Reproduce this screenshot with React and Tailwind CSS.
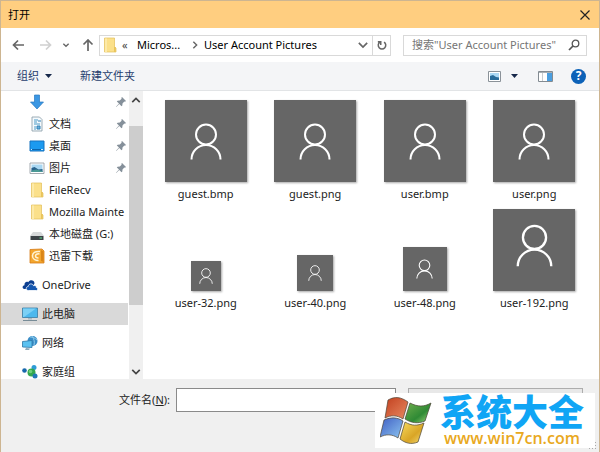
import React from "react";

const icons = {
  folder: (
    <svg viewBox="0 0 16 16" className="h-4 w-4 shrink-0">
      <path d="M2.500 1h10v9.500l1.500.5v4H2.500z" fill="#fbe08a" stroke="#e3bf57" strokeWidth=".7" />
      <path d="M12 10h1.800v5H12z" fill="#e9c45c" />
      <path d="M3 1.500h2V15H3z" fill="#fdeaa8" />
    </svg>
  ),
  download: (
    <svg viewBox="0 0 16 16" className="h-4 w-4 shrink-0">
      <path d="M5.500 1h5v7h4L8 15 1.500 8h4z" fill="#3b97e3" stroke="#2878c0" strokeWidth=".7" />
    </svg>
  ),
  document: (
    <svg viewBox="0 0 16 16" className="h-4 w-4 shrink-0">
      <path d="M3 1h7.500L13 3.500V15H3z" fill="#f5fafd" stroke="#8799a5" strokeWidth=".8" />
      <path d="M5 4h4M5 6h3M5 8h6M5 11h2M5 13h2" stroke="#4a9bc7" />
      <path d="M9 5h3M8 10h3v3H8z" stroke="#3380b5" fill="#68b2dd" />
    </svg>
  ),
  desktop: (
    <svg viewBox="0 0 16 16" className="h-4 w-4 shrink-0">
      <path d="M1 3h14v10H1z" fill="#1c9af0" stroke="#1673bf" />
      <path d="M2 11.500h12" stroke="#0c65ad" />
      <path d="M2 11.500h1m9 0h2" stroke="#c5e8ff" />
    </svg>
  ),
  picture: (
    <svg viewBox="0 0 16 16" className="h-4 w-4 shrink-0">
      <path d="M1 3h14v10.500H1z" fill="#fff" stroke="#8d969c" strokeWidth=".8" />
      <path d="M2.500 4.500h11V12h-11z" fill="#a9d7f2" />
      <path d="M2.500 8l3-1 4 2.500 4-.5v3h-11z" fill="#28618b" />
      <path d="M2.500 10.500l5-1 6 1.500v1h-11z" fill="#4b9a94" />
    </svg>
  ),
  drive: (
    <svg viewBox="0 0 16 16" className="h-4 w-4 shrink-0">
      <path d="M4 6h8l3 4H1z" fill="#d7d9da" />
      <path d="M1.500 10h13v4h-13z" fill="#3d4347" />
      <path d="M10.500 12h2.500" stroke="#5fe08b" />
    </svg>
  ),
  thunder: (
    <svg viewBox="0 0 16 16" className="h-4 w-4 shrink-0">
      <path d="M1 1.500l12-.5 2 2v12H1z" fill="#f3a62e" stroke="#d77b16" strokeWidth=".8" />
      <path d="M12 2l2.500 1.500V14L12 13z" fill="#d98518" />
      <path d="M11 3.500C6 3 3.500 5 3.500 8s3 4.500 6 4.500M10.500 6C8 5.500 6.500 6.500 6.500 8s1.500 2 3 2" fill="none" stroke="#fff3d3" strokeWidth="1.500" />
    </svg>
  ),
  cloud: (
    <svg viewBox="0 0 16 16" className="h-4 w-4 shrink-0">
      <path d="M2.500 12C0 12 0 8.500 2.500 8.300 2 5 5 4 6.300 5.200 8 2 12.500 3 12.500 6.500L9 12z" fill="#0c3f91" />
      <path d="M6.500 13.500c-3 0-3-3.800-.3-4C6.500 6.500 10.500 6 11.500 8.700c2-.7 3.200.6 2.800 1.800 2 .3 1.700 3-.3 3z" fill="#1557b0" stroke="#fff" strokeWidth=".8" />
    </svg>
  ),
  computer: (
    <svg viewBox="0 0 16 16" className="h-4 w-4 shrink-0">
      <path d="M.5 2h15v9.500H.5z" fill="#4cb8ed" stroke="#397ca3" strokeWidth=".8" />
      <path d="M1 2.500h13L2 11H1z" fill="#7bd0f5" />
      <path d="M6 12h4v1.500H6z" fill="#a9bac4" />
      <path d="M1 14.500h14" stroke="#788c97" />
    </svg>
  ),
  network: (
    <svg viewBox="0 0 16 16" className="h-4 w-4 shrink-0">
      <circle cx="10.500" cy="6" r="5" fill="#398dc7" />
      <path d="M8 2c3 0 5 1 7 3M10 1c2 3 3 6 2 9" stroke="#8cc9ea" fill="none" />
      <path d="M.5 6.500L10 5.500v7L.5 12z" fill="#5ac1f0" stroke="#2d76a5" strokeWidth=".8" />
      <path d="M4 13l4 .5-1 1.500H3z" fill="#8ba8b9" />
    </svg>
  ),
  homegroup: (
    <svg viewBox="0 0 16 16" className="h-4 w-4 shrink-0">
      <circle cx="2.500" cy="6.500" r="2.300" fill="#1767ac" />
      <circle cx="12" cy="3.500" r="2.500" fill="#2e9cd7" />
      <circle cx="9.500" cy="8.500" r="4" fill="#34a84e" />
      <circle cx="8.500" cy="7.500" r="1.800" fill="#6fd07c" />
      <circle cx="13" cy="12" r="2.500" fill="#2178b7" />
    </svg>
  ),
};

const quick = [
  { icon: "download", label: "", pin: true },
  { icon: "document", label: "文档", pin: true },
  { icon: "desktop", label: "桌面", pin: true },
  { icon: "picture", label: "图片", pin: true },
  { icon: "folder", label: "FileRecv" },
  { icon: "folder", label: "Mozilla Mainte" },
  { icon: "drive", label: "本地磁盘 (G:)" },
  { icon: "thunder", label: "迅雷下载" },
];

const places = [
  { icon: "cloud", label: "OneDrive", row: "items-center" },
  { icon: "computer", label: "此电脑", row: "items-center bg-[#d9d9d9]" },
  { icon: "network", label: "网络", row: "items-center" },
  { icon: "homegroup", label: "家庭组", row: "items-center -mb-1" },
];

const big = "h-[82px] w-[82px]";
const files = [
  { name: "guest.bmp", tile: big, person: "h-[37px] w-8" },
  { name: "guest.png", tile: big, person: "h-[37px] w-8" },
  { name: "user.bmp", tile: big, person: "h-[37px] w-8" },
  { name: "user.png", tile: big, person: "h-[37px] w-8" },
  { name: "user-32.png", tile: "h-[30px] w-[30px]", person: "h-4 w-3.5" },
  { name: "user-40.png", tile: "h-9 w-9", person: "h-4 w-3.5" },
  { name: "user-48.png", tile: "h-11 w-11", person: "h-5 w-[17px]" },
  { name: "user-192.png", tile: big + " pb-2.5", person: "h-[43px] w-[37px]" },
];

function Pin() {
  return (
    <svg viewBox="0 0 10 10" className="mr-[3px] ml-auto h-2.5 w-2.5 shrink-0">
      <path d="M6 0l4 4-1 .7-.7-.2L6.500 6.400 6.300 8.500l-.8.8L3.300 7 .5 9.800 0 10l.2-.6L3 6.600.8 4.500l.8-.8 2.200-.2L5.600 1.700 5.400.8z" fill="#85909a" />
    </svg>
  );
}

function Line({ d, color = "#666", size = "h-3 w-3", width = 1.7 }) {
  return (
    <svg viewBox="0 0 12 12" className={size} fill="none" stroke={color} strokeWidth={width}>
      <path d={d} />
    </svg>
  );
}

function WindowsFlag() {
  return (
    <svg viewBox="0 0 52 48" className="h-12 w-[52px] shrink-0">
      <defs>
        <linearGradient id="r" x2="1" y2="1"><stop stopColor="#c2401f" /><stop offset="1" stopColor="#e88a62" /></linearGradient>
        <linearGradient id="g" x2="1" y2="1"><stop stopColor="#6fae4c" /><stop offset=".6" stopColor="#2f8a35" /><stop offset="1" stopColor="#9fd67a" /></linearGradient>
        <linearGradient id="b" x2="1" y2="1"><stop stopColor="#3f5fc4" /><stop offset="1" stopColor="#8cc4f0" /></linearGradient>
        <linearGradient id="y" x2="1" y2="1"><stop stopColor="#f8dc60" /><stop offset=".6" stopColor="#d9a526" /><stop offset="1" stopColor="#f5dd77" /></linearGradient>
      </defs>
      <g stroke="#4b4335" strokeWidth=".7">
        <path d="M8 3C15-1 21 0 28 5l-5 17C17 18 11 18 5 21z" fill="url(#r)" />
        <path d="M30 6c8 4 14 4 21 0l-6 18c-7 3-14 2-20-2z" fill="url(#g)" />
        <path d="M4 23c7-3 13-3 19 1l-5 17C12 37 6 37 0 40z" fill="url(#b)" />
        <path d="M25 25c7 4 12 4 19 1l-6 19c-7 3-13 1-18-3z" fill="url(#y)" />
      </g>
    </svg>
  );
}

export default function App() {
  return (
    <main className="relative w-full border border-[#cdb591] bg-white font-['Noto_Sans','Noto_Sans_CJK_SC',sans-serif] text-[11px] leading-4 text-[#222]">
      <header className="flex h-[27px] items-center justify-between bg-[#ffce80] pr-1.5 pl-[7px] text-black">
        <h1>打开</h1>
        <button aria-label="关闭" className="p-0.5"><Line d="M1.500 1.500l9 9m0-9l-9 9" color="#222" width={1.2} /></button>
      </header>

      <nav className="flex h-[34px] items-center pr-3 pl-[11px]">
        <button aria-label="后退" className="w-7"><Line d="M12 6H1m5-4.500L1.500 6 6 10.500" /></button>
        <button aria-label="前进" className="w-[22px]"><Line d="M0 6h11M6 1.500L10.500 6 6 10.500" color="#d0d0d0" /></button>
        <button aria-label="最近浏览的位置" className="w-5"><Line d="M2 4l4 4 4-4" size="h-2 w-2" width={2} /></button>
        <button aria-label="上移" className="w-[17px]"><Line d="M6 12V1M1.500 5.500L6 1l4.500 4.500" /></button>
        <div className="flex h-[21px] min-w-0 flex-1 items-center border border-[#d9d9d9] pl-0.5 text-black">
          {icons.folder}
          <span className="ml-1 w-[15px] text-[#444]">«</span>
          <button className="w-[53px] text-left">Micros...</button>
          <Line d="M4 2l4 4-4 4" size="h-2.5 w-2.5" />
          <button className="ml-1 truncate">User Account Pictures</button>
          <button aria-label="展开地址" className="ml-auto flex w-[18px] shrink-0 justify-center"><Line d="M1 3.500l5 5 5-5" size="h-2.5 w-2.5" width={2} /></button>
          <button aria-label="刷新" className="flex h-full w-[18px] shrink-0 items-center justify-center border-l border-[#d9d9d9]">
            <Line d="M8.500 2.500A4.500 4.500 0 1 1 3.500 2.500M4.500 6V2H1" size="h-2.5 w-2.5" width={1.8} />
          </button>
        </div>
        <label className="ml-3 flex h-[21px] w-[184px] items-center border border-[#d9d9d9] pr-1.5 pl-2">
          <input aria-label="搜索" placeholder={'搜索"User Account Pictures"'} className="min-w-0 flex-1 outline-none placeholder:text-[#767676]" />
          <svg viewBox="0 0 12 12" className="h-3 w-3 shrink-0" fill="none" stroke="#555" strokeWidth="1.300"><circle cx="7.500" cy="4.500" r="3.300" /><path d="M5 7L1 11" strokeWidth="1.700" /></svg>
        </label>
      </nav>

      <div className="flex h-[29px] items-center border-b border-[#e2e4e6] bg-[#f4f5f7] pr-[13px] pl-4 text-[#1f3d6d]">
        <button className="flex items-center gap-1.5">组织<svg viewBox="0 0 7 4" className="h-1 w-[7px]"><path d="M0 0h7L3.500 4z" fill="#16284a" /></svg></button>
        <button className="ml-7">新建文件夹</button>
        <button aria-label="更改视图" className="ml-auto">
          <svg viewBox="0 0 13 11" className="h-[11px] w-[13px]"><path d="M.5.5h12v10H.5z" fill="#fff" stroke="#8b9299" /><path d="M2 2h9v7H2z" fill="#abd8f4" /><path d="M2 5l3-1 3 2 3 .5V9H2z" fill="#286b9a" /></svg>
        </button>
        <button aria-label="更多选项" className="ml-2.5"><svg viewBox="0 0 7 4" className="h-1 w-[7px]"><path d="M0 0h7L3.500 4z" fill="#16284a" /></svg></button>
        <button aria-label="预览窗格" className="ml-5">
          <svg viewBox="0 0 15 11" className="h-[11px] w-[15px]"><path d="M.5.5h14v10H.5z" fill="#fff" stroke="#838b92" /><path d="M1 1h13v1H1z" fill="#a9b0b5" /><path d="M9 2h5v8H9z" fill="#4a9ee0" /><path d="M4.500 2v8" stroke="#c7ccd0" /></svg>
        </button>
        <button aria-label="帮助" className="ml-[18px] flex h-[15px] w-[15px] items-center justify-center rounded-full bg-[#0d62b8] text-xs font-bold text-white">?</button>
      </div>

      <section className="flex">
        <aside className="flex w-32 shrink-0 flex-col gap-[7px] overflow-hidden whitespace-nowrap">
          <ul>
            {quick.map((q, i) => (
              <li key={i} className="flex h-[22px] items-center gap-1 pl-7">
                {icons[q.icon]}
                <span>{q.label}</span>
                {q.pin && <Pin />}
              </li>
            ))}
          </ul>
          {places.map((p) => (
            <div key={p.label} className={"mr-px flex h-[22px] shrink-0 gap-1 pl-[21px] " + p.row}>
              {icons[p.icon]}
              <span>{p.label}</span>
            </div>
          ))}
        </aside>
        <div className="flex w-3.5 shrink-0 flex-col items-center bg-[#f0f0f0]">
          <button aria-label="向上滚动" className="flex h-[35px] items-start pt-1"><Line d="M1.500 8.500L6 4l4.500 4.500" size="h-2.5 w-2.5" width={2} color="#444" /></button>
          <div className="w-full flex-[180] bg-[#cdcdcd]" />
          <button aria-label="向下滚动" className="flex flex-[72] items-end pb-0.5"><Line d="M1.500 3.500L6 8l4.500-4.500" size="h-2.5 w-2.5" width={2} color="#444" /></button>
        </div>
        <ul className="grid min-w-0 flex-1 grid-cols-4 content-start gap-y-[7px] pt-[9px] pr-2.5 pl-2">
          {files.map((f) => (
            <li key={f.name} className="flex h-[102px] flex-col items-center justify-end gap-1">
              <div className={"flex items-center justify-center bg-[#666] shadow-[1px_1px_2px_rgba(0,0,0,0.35)] " + f.tile}>
                <svg viewBox="25 23 32 37" className={f.person} fill="none" stroke="#fff" strokeWidth="2">
                  <circle cx="41" cy="34.500" r="10" />
                  <path d="M26.500 59.500a14.500 14.500 0 0 1 29 0" />
                </svg>
              </div>
              <span>{f.name}</span>
            </li>
          ))}
        </ul>
      </section>

      <footer className="flex h-[73px] items-start bg-[#f0f0f0] pt-[9px] pr-4">
        <label htmlFor="filename" className="w-[175px] shrink-0 pt-1 pr-1.5 text-right">文件名(<u>N</u>):</label>
        <input id="filename" className="h-6 min-w-0 flex-1 border border-[#8a8a8a] bg-white px-1 outline-none" />
        <select aria-label="文件类型" className="ml-3 h-6 w-[175px] shrink-0 appearance-none border border-[#adadad] bg-[#e8e8e8]" />
      </footer>

      <svg viewBox="0 0 8 8" className="absolute right-0.5 bottom-0.5 h-2 w-2" fill="#aaa"><path d="M6 0h1v1H6zM6 3h1v1H6zM3 3h1v1H3zM6 6h1v1H6zM3 6h1v1H3zM0 6h1v1H0z" /></svg>
      <div className="absolute right-1 bottom-1 flex h-[55px] w-[220px] items-center gap-2 bg-white pl-[5px]">
        <WindowsFlag />
        <div className="flex flex-col items-center pb-1 whitespace-nowrap">
          <strong className="font-['Noto_Sans_CJK_SC',sans-serif] text-4xl leading-9 font-black text-[#10a5f5]">系统大全</strong>
          <a href="#site" className="mt-0.5 font-['Open_Sans',sans-serif] text-base leading-4 font-semibold text-[#e9a820]">www.win7cn.com</a>
        </div>
      </div>
    </main>
  );
}
